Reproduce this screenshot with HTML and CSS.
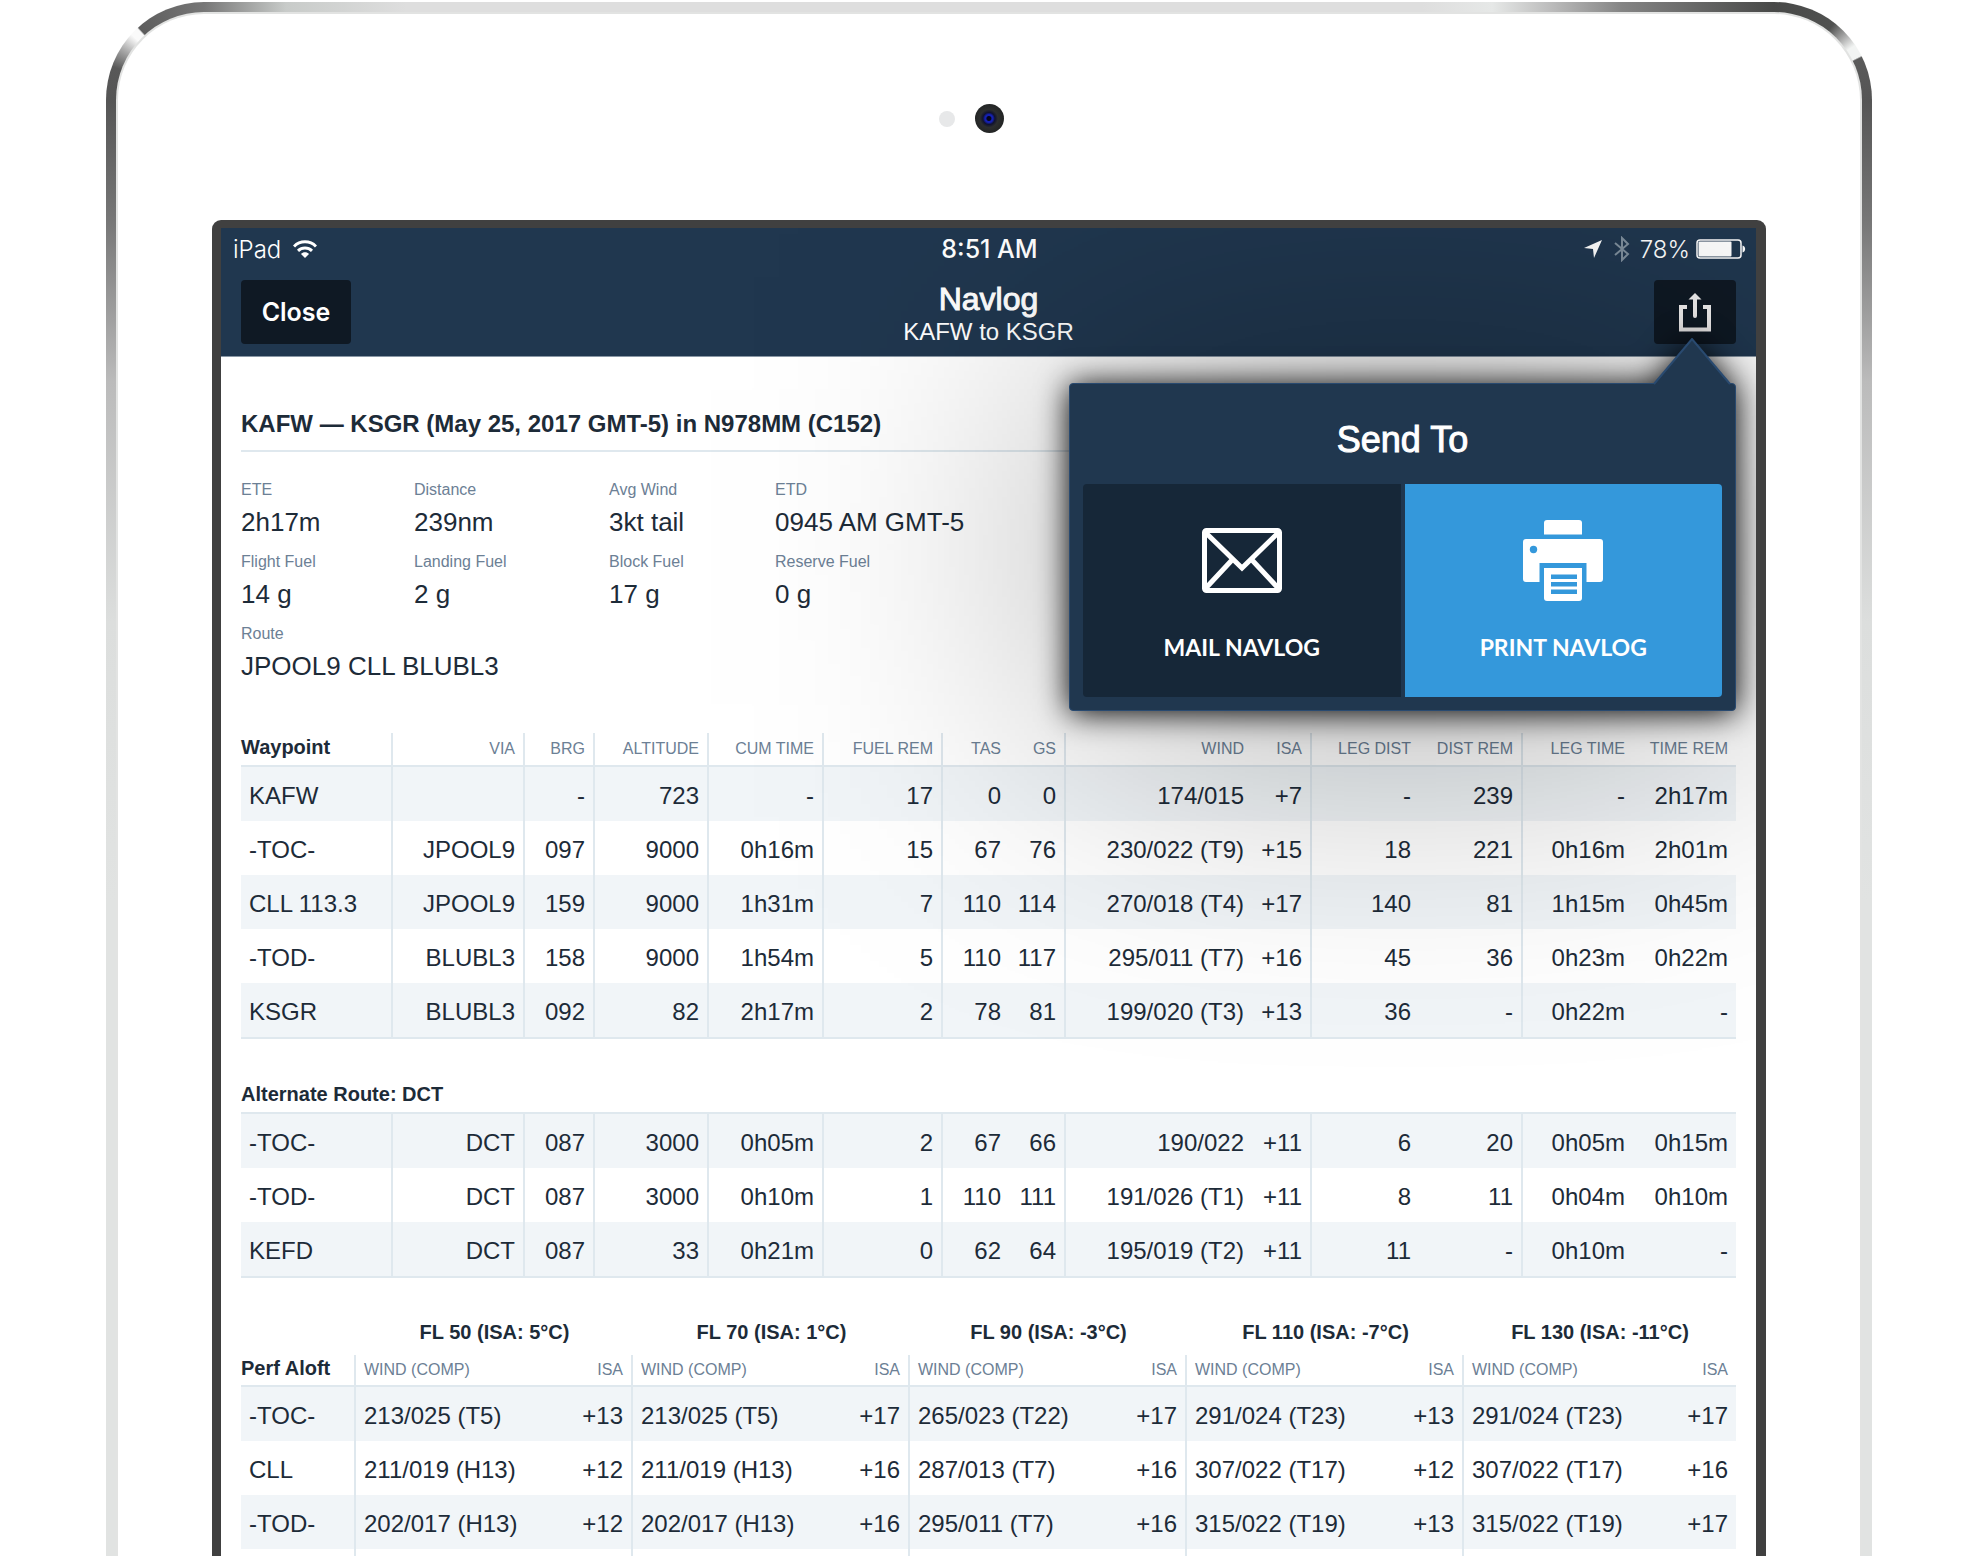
FILE: index.html
```html
<!DOCTYPE html>
<html lang="en">
<head>
	<meta charset="utf-8">
	<title>Navlog</title>
	<link rel="stylesheet" href="styles.css">
</head>
<body>
<div class="device">
	<div class="bezel">
		<div class="camera-bar">
			<span class="sensor"></span>
			<span class="camera"></span>
		</div>
		<div class="screen">
			<header class="topbar">
				<div class="status">
					<div class="status-left">
						<span>iPad</span>
						<svg width="24" height="19" viewBox="0 0 24 19" fill="none" stroke="#fff" stroke-width="3">
							<path d="M1 6.500C7 .300 17 .300 23 6.500"/>
							<path d="M5 10.800C9 7 15 7 19 10.800"/>
							<path d="M12 18L8 14C10 11.800 14 11.800 16 14Z" fill="#fff" stroke="none"/>
						</svg>
					</div>
					<span class="clock">8:51 AM</span>
					<div class="status-right">
						<svg width="18" height="18" viewBox="0 0 18 18"><path d="M18 0L10 18L9 9L0 8Z" fill="#fff"/></svg>
						<svg class="bluetooth" width="16" height="26" viewBox="0 0 16 26" fill="none" stroke="#7f8f9d" stroke-width="2"><path d="M1 7L14 18L8 24V2L14 8L1 19"/></svg>
						<span>78%</span>
						<svg width="50" height="20" viewBox="0 0 50 20">
							<rect x="1" y="1" width="44" height="18" rx="3" fill="none" stroke="#fff" stroke-width="1.500"/>
							<rect x="2.500" y="2.500" width="33" height="15" rx="1" fill="#fff"/>
							<path d="M46.500 6.500C50 7 50 13 46.500 13.500Z" fill="#fff"/>
						</svg>
					</div>
				</div>
				<div class="nav">
					<button class="btn close">Close</button>
					<div class="nav-title">
						<h1>Navlog</h1>
						<p>KAFW to KSGR</p>
					</div>
					<button class="btn share" aria-label="Share">
						<svg width="32" height="39" viewBox="0 0 32 39" fill="none" stroke="#f2f0f0" stroke-width="4">
							<path d="M8 14H2V36.500H30V14H24"/>
							<path d="M16 5V23" stroke-linecap="round"/>
							<path d="M16 0L22.500 6.500H9.500Z" fill="#f2f0f0" stroke="none"/>
						</svg>
					</button>
				</div>
			</header>

			<main class="content">
				<h2>KAFW — KSGR (May 25, 2017 GMT-5) in N978MM (C152)</h2>
				<dl class="summary">
					<div><dt>ETE</dt><dd>2h17m</dd></div>
					<div><dt>Distance</dt><dd>239nm</dd></div>
					<div><dt>Avg Wind</dt><dd>3kt tail</dd></div>
					<div><dt>ETD</dt><dd>0945 AM GMT-5</dd></div>
					<div><dt>Flight Fuel</dt><dd>14 g</dd></div>
					<div><dt>Landing Fuel</dt><dd>2 g</dd></div>
					<div><dt>Block Fuel</dt><dd>17 g</dd></div>
					<div><dt>Reserve Fuel</dt><dd>0 g</dd></div>
					<div class="route"><dt>Route</dt><dd>JPOOL9 CLL BLUBL3</dd></div>
				</dl>

				<table class="log">
					<colgroup>
						<col class="c-name"><col class="c-via"><col class="c-brg"><col class="c-alt"><col class="c-cum"><col class="c-fuel"><col class="c-tas"><col class="c-gs"><col class="c-wind"><col class="c-isa"><col class="c-leg"><col class="c-rem"><col class="c-legtime"><col class="c-remtime">
					</colgroup>
					<thead>
						<tr><th class="name">Waypoint</th><th>VIA</th><th>BRG</th><th>ALTITUDE</th><th>CUM TIME</th><th>FUEL REM</th><th>TAS</th><th>GS</th><th>WIND</th><th>ISA</th><th>LEG DIST</th><th>DIST REM</th><th>LEG TIME</th><th>TIME REM</th></tr>
					</thead>
					<tbody>
						<tr><td>KAFW</td><td></td><td>-</td><td>723</td><td>-</td><td>17</td><td>0</td><td>0</td><td>174/015</td><td>+7</td><td>-</td><td>239</td><td>-</td><td>2h17m</td></tr>
						<tr><td>-TOC-</td><td>JPOOL9</td><td>097</td><td>9000</td><td>0h16m</td><td>15</td><td>67</td><td>76</td><td>230/022 (T9)</td><td>+15</td><td>18</td><td>221</td><td>0h16m</td><td>2h01m</td></tr>
						<tr><td>CLL 113.3</td><td>JPOOL9</td><td>159</td><td>9000</td><td>1h31m</td><td>7</td><td>110</td><td>114</td><td>270/018 (T4)</td><td>+17</td><td>140</td><td>81</td><td>1h15m</td><td>0h45m</td></tr>
						<tr><td>-TOD-</td><td>BLUBL3</td><td>158</td><td>9000</td><td>1h54m</td><td>5</td><td>110</td><td>117</td><td>295/011 (T7)</td><td>+16</td><td>45</td><td>36</td><td>0h23m</td><td>0h22m</td></tr>
						<tr><td>KSGR</td><td>BLUBL3</td><td>092</td><td>82</td><td>2h17m</td><td>2</td><td>78</td><td>81</td><td>199/020 (T3)</td><td>+13</td><td>36</td><td>-</td><td>0h22m</td><td>-</td></tr>
					</tbody>
				</table>

				<h3>Alternate Route: DCT</h3>
				<table class="log alternate">
					<colgroup>
						<col class="c-name"><col class="c-via"><col class="c-brg"><col class="c-alt"><col class="c-cum"><col class="c-fuel"><col class="c-tas"><col class="c-gs"><col class="c-wind"><col class="c-isa"><col class="c-leg"><col class="c-rem"><col class="c-legtime"><col class="c-remtime">
					</colgroup>
					<tbody>
						<tr><td>-TOC-</td><td>DCT</td><td>087</td><td>3000</td><td>0h05m</td><td>2</td><td>67</td><td>66</td><td>190/022</td><td>+11</td><td>6</td><td>20</td><td>0h05m</td><td>0h15m</td></tr>
						<tr><td>-TOD-</td><td>DCT</td><td>087</td><td>3000</td><td>0h10m</td><td>1</td><td>110</td><td>111</td><td>191/026 (T1)</td><td>+11</td><td>8</td><td>11</td><td>0h04m</td><td>0h10m</td></tr>
						<tr><td>KEFD</td><td>DCT</td><td>087</td><td>33</td><td>0h21m</td><td>0</td><td>62</td><td>64</td><td>195/019 (T2)</td><td>+11</td><td>11</td><td>-</td><td>0h10m</td><td>-</td></tr>
					</tbody>
				</table>

				<table class="perf">
					<colgroup>
						<col class="p-name"><col class="p-wind"><col class="p-isa"><col class="p-wind"><col class="p-isa"><col class="p-wind"><col class="p-isa"><col class="p-wind"><col class="p-isa"><col class="p-wind"><col>
					</colgroup>
					<thead>
						<tr class="levels"><td></td><th colspan="2">FL 50 (ISA: 5°C)</th><th colspan="2">FL 70 (ISA: 1°C)</th><th colspan="2">FL 90 (ISA: -3°C)</th><th colspan="2">FL 110 (ISA: -7°C)</th><th colspan="2">FL 130 (ISA: -11°C)</th></tr>
						<tr class="heads"><th class="name">Perf Aloft</th><th>WIND (COMP)</th><th>ISA</th><th>WIND (COMP)</th><th>ISA</th><th>WIND (COMP)</th><th>ISA</th><th>WIND (COMP)</th><th>ISA</th><th>WIND (COMP)</th><th>ISA</th></tr>
					</thead>
					<tbody>
						<tr><td>-TOC-</td><td>213/025 (T5)</td><td>+13</td><td>213/025 (T5)</td><td>+17</td><td>265/023 (T22)</td><td>+17</td><td>291/024 (T23)</td><td>+13</td><td>291/024 (T23)</td><td>+17</td></tr>
						<tr><td>CLL</td><td>211/019 (H13)</td><td>+12</td><td>211/019 (H13)</td><td>+16</td><td>287/013 (T7)</td><td>+16</td><td>307/022 (T17)</td><td>+12</td><td>307/022 (T17)</td><td>+16</td></tr>
						<tr><td>-TOD-</td><td>202/017 (H13)</td><td>+12</td><td>202/017 (H13)</td><td>+16</td><td>295/011 (T7)</td><td>+16</td><td>315/022 (T19)</td><td>+13</td><td>315/022 (T19)</td><td>+17</td></tr>
						<tr><td></td><td></td><td></td><td></td><td></td><td></td><td></td><td></td><td></td><td></td><td></td></tr>
					</tbody>
				</table>
			</main>

			<div class="popover-wrap">
				<section class="popover">
					<svg class="arrow" width="78" height="47" viewBox="0 0 78 47">
						<path d="M0 47L39 1L78 47Z" fill="#20374f"/>
						<path d="M1 46L39 1L77 46" fill="none" stroke="#294a70" stroke-width="2"/>
					</svg>
					<h2>Send To</h2>
					<div class="choices">
						<button class="choice mail">
							<svg width="80" height="81" viewBox="0 0 80 81" fill="none" stroke="#fff" stroke-width="5">
								<rect x="2.500" y="10.500" width="75" height="60" rx="2"/>
								<path d="M3 12L40 48L77 12M3 69L30 40M77 69L50 40"/>
							</svg>
							<span>MAIL NAVLOG</span>
						</button>
						<button class="choice print">
							<svg width="80" height="81" viewBox="0 0 80 81" fill="#fff">
								<path d="M21 14.500V3Q21 0 24 0H56Q59 0 59 3V14.500Z"/>
								<path d="M3 19H77Q80 19 80 22V59Q80 62 77 62H63.500V43H16.500V62H3Q0 62 0 59V22Q0 19 3 19Z"/>
								<path d="M21 48H59V78Q59 81 56 81H24Q21 81 21 78Z"/>
								<g fill="#3498db">
									<circle cx="10.500" cy="29.500" r="3.700"/>
									<rect x="28" y="54.500" width="26" height="4.500"/>
									<rect x="28" y="62" width="26" height="4.500"/>
									<rect x="28" y="69.500" width="26" height="4.500"/>
								</g>
							</svg>
							<span>PRINT NAVLOG</span>
						</button>
					</div>
				</section>
			</div>
		</div>
	</div>
</div>
</body>
</html>
```
FILE: styles.css
```css
*{
	padding: 0;
	margin: 0;
	box-sizing: border-box;
}
body{
	height: 100vh;
	overflow: hidden;
	padding: 2px 105px 0 106px;
	background: #fff;
	color: #1d2b38;
	font-family: "Liberation Sans", Arial, sans-serif;
	font-size: 24px;
}
button{
	border: 0;
	color: #fff;
	font-family: inherit;
	cursor: pointer;
}
svg{
	display: block;
}

/* metal edge of the tablet */
.device{
	padding: 10px 10px 0;
	border-radius: 98px 98px 0 0;
	background:
		conic-gradient(from 270deg at 98px 98px, #555 0deg, #585858 20deg, #aaa 32deg, #fafafa 42deg, #fafafa 47deg, #5c5c5c 48deg, #777 90deg, transparent 90deg) 0 0 / 98px 98px no-repeat,
		conic-gradient(from 0deg at 0 98px, #484948 0deg, #505150 38deg, #aaa 48deg, #f2f4f3 56deg, #f2f4f3 63deg, #5a5a5a 64deg, #555 90deg, transparent 90deg) 100% 0 / 98px 98px no-repeat,
		linear-gradient(90deg, #777 98px, #c8cbc9 180px, #dedede 300px, #dedede calc(100% - 450px), #e6e8e7 calc(100% - 380px), #bbb calc(100% - 320px), #848484 calc(100% - 250px), #484948 calc(100% - 98px)) 0 0 / 100% 98px no-repeat,
		linear-gradient(#555 98px, #777 220px, #bbb 380px, #dcdedd 620px, #e1e3e2 900px);
}
.bezel{
	padding: 90px 94px 0;
	border: 2px solid #e2e3e2;
	border-bottom: 0;
	border-radius: 88px 88px 0 0;
	background: #fff;
}
.camera-bar{
	display: grid;
	grid-template-columns: 1fr auto 1fr;
	align-items: center;
	column-gap: 20px;
	margin-bottom: 87px;
}
.sensor{
	justify-self: end;
	width: 16px;
	height: 16px;
	border-radius: 50%;
	background: #e7e8e9;
}
.camera{
	width: 29px;
	height: 29px;
	border-radius: 50%;
	background: radial-gradient(circle at 48% 50%, #05051c 0 2px, #1420b0 3px 4px, #10122e 6px, #2c2e2e 9px, #222424 15px);
}
.screen{
	position: relative;
	overflow: hidden;
	border: 9px solid #404040;
	border-top-width: 8px;
	border-right-width: 10px;
	border-bottom: 0;
	border-radius: 9px 9px 0 0;
}

/* header */
.topbar{
	height: 129px;
	background: #20374f;
	border-bottom: 1px solid #8997a5;
	color: #fff;
}
.status, .nav{
	display: grid;
	grid-template-columns: 1fr auto 1fr;
	align-items: center;
}
.status{
	height: 42px;
	padding: 0 10px 0 12px;
	font-family: Inter, Roboto, sans-serif;
}
.status-left, .status-right{
	display: flex;
	align-items: center;
	gap: 12px;
	font-weight: 300;
}
.status-right{
	justify-content: flex-end;
	gap: 6px;
}
.bluetooth{
	margin: 0 4px 0 6px;
}
.clock{
	font-size: 25px;
	font-weight: 500;
}
.nav{
	padding: 5px 20px 0;
}
.btn{
	height: 64px;
	border-radius: 4px;
	background: #0f1924;
	font-family: Inter, Roboto, sans-serif;
	font-size: 25px;
	font-weight: 600;
}
.close{
	justify-self: start;
	width: 110px;
}
.share{
	justify-self: end;
	width: 82px;
	display: flex;
	align-items: center;
	justify-content: center;
}
.nav-title{
	padding-top: 8px;
	text-align: center;
	line-height: 34px;
}
.nav-title h1{
	font-size: 32px;
	font-weight: normal;
	line-height: 32px;
	-webkit-text-stroke: 1px #fff;
}

/* summary */
.content{
	padding: 51px 20px 0;
	background: #fff;
}
.content h2{
	padding-bottom: 10px;
	border-bottom: 2px solid #dfe8ee;
	font-size: 24px;
	line-height: 32px;
}
.summary{
	display: grid;
	grid-template-columns: 173px 195px 166px 1fr;
	row-gap: 8px;
	margin: 24px 0 49px;
}
.route{
	grid-column: 1 / -1;
}
dt{
	color: #6c8095;
	font-size: 16px;
	line-height: 28px;
}
dd{
	font-size: 26px;
	line-height: 36px;
}

/* tables */
table{
	width: 100%;
	table-layout: fixed;
	border-collapse: separate;
	border-spacing: 0;
	border-bottom: 2px solid #dfe8ee;
}
th, td{
	padding: 0 8px;
	text-align: right;
	white-space: nowrap;
}
th{
	height: 34px;
	border-bottom: 2px solid #dfe8ee;
	color: #6c8095;
	font-size: 16px;
	font-weight: normal;
}
th.name{
	padding: 0 0 3px;
	color: #1d2b38;
	font-size: 20px;
	font-weight: bold;
}
td{
	height: 54px;
	padding-top: 4px;
}
th:first-child, td:first-child{
	text-align: left;
}
tbody tr:nth-child(odd){
	background: #f1f5f8;
}
.log th:nth-child(-n+6), .log td:nth-child(-n+6),
.log th:nth-child(8), .log td:nth-child(8),
.log th:nth-child(10), .log td:nth-child(10),
.log th:nth-child(12), .log td:nth-child(12){
	border-right: 2px solid #dfe8ee;
}
.c-name{ width: 152px; }
.c-via{ width: 132px; }
.c-brg{ width: 70px; }
.c-alt{ width: 114px; }
.c-cum{ width: 115px; }
.c-fuel{ width: 119px; }
.c-tas{ width: 66px; }
.c-gs{ width: 57px; }
.c-wind{ width: 186px; }
.c-isa{ width: 60px; }
.c-leg{ width: 107px; }
.c-rem{ width: 104px; }
.c-legtime{ width: 110px; }
.c-remtime{ width: 103px; }

h3{
	margin-top: 39px;
	padding-bottom: 2px;
	font-size: 20px;
	line-height: 32px;
}
.alternate{
	border-top: 2px solid #dfe8ee;
}
.perf{
	margin-top: 37px;
}
.p-name{ width: 115px; }
.p-wind{ width: 180px; }
.p-isa{ width: 97px; }
.perf .levels th{
	height: 40px;
	padding-bottom: 6px;
	border: 0;
	color: #1d2b38;
	font-size: 20px;
	font-weight: bold;
	text-align: center;
}
.perf .levels td{
	height: 40px;
}
.heads th{
	height: 32px;
}
.heads th:nth-child(even), .perf tbody td:nth-child(even){
	text-align: left;
}
.heads th:nth-child(odd):not(:last-child),
.perf tbody td:nth-child(odd):not(:last-child){
	border-right: 2px solid #dfe8ee;
}

/* send to popover */
.popover-wrap{
	position: absolute;
	top: 155px;
	right: 20px;
	width: 667px;
}
.popover-wrap::before{
	content: "";
	position: absolute;
	inset: 0;
	background: rgba(0, 0, 0, .38);
	filter: blur(160px);
}
.popover{
	position: relative;
	padding: 34px 13px 13px;
	border: 1px solid #294a70;
	border-radius: 4px;
	background: #20374f;
	color: #fff;
	filter: drop-shadow(0 2px 16px #000);
}
.arrow{
	position: absolute;
	top: -46px;
	right: 4px;
}
.popover h2{
	margin-bottom: 22px;
	font-size: 36px;
	font-weight: normal;
	line-height: 44px;
	text-align: center;
	-webkit-text-stroke: 1px #fff;
}
.choices{
	display: grid;
	grid-template-columns: 1fr 1fr;
	gap: 4px;
}
.choice{
	display: flex;
	flex-direction: column;
	align-items: center;
	gap: 32px;
	height: 213px;
	padding-top: 36px;
	font-family: Lato, sans-serif;
	font-size: 23px;
	font-weight: bold;
	line-height: 28px;
}
.mail{
	border-radius: 4px 0 0 4px;
	background: #162738;
}
.print{
	border-radius: 0 4px 4px 0;
	background: #3498db;
}
```
